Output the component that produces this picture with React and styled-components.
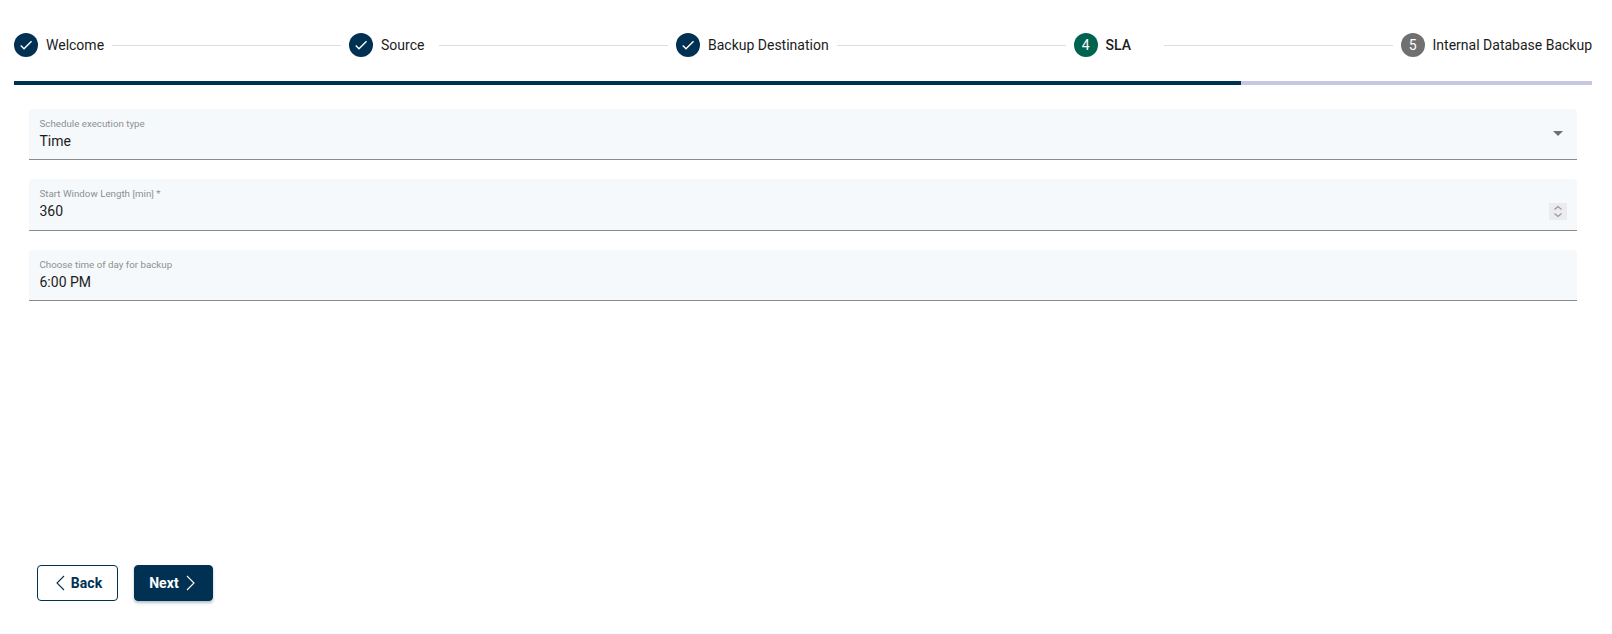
import React from 'react'
import styled, { createGlobalStyle } from 'styled-components'

const Global = createGlobalStyle`
  html, body { margin: 0; padding: 0; background: #fff; }
  body { font-family: Roboto, 'Liberation Sans', sans-serif; color: #1c1c1c; }
`

const Page = styled.div`
  display: flex;
  flex-direction: column;
  box-sizing: border-box;
  height: 634px;
  padding: 33px 20px 33px 14px;
`

const Stepper = styled.div`
  display: flex;
  align-items: center;
  height: 24px;
`

const Circle = styled.span`
  flex: none;
  display: flex;
  align-items: center;
  justify-content: center;
  width: 24px;
  height: 24px;
  border-radius: 50%;
  color: #fff;
  font-size: 14px;
  background: ${p => (p.$state === 'done' ? '#003153' : p.$state === 'active' ? '#00634f' : '#707070')};
`

const Label = styled.span`
  margin-left: 8px;
  min-width: 50px;
  font-size: 14px;
  line-height: 20px;
  white-space: nowrap;
  font-weight: ${p => (p.$active ? 500 : 400)};
`

const Line = styled.span`
  flex: 1;
  height: 1px;
  margin: 0 8px;
  background: #dedede;
`

const Progress = styled.div`
  height: 4px;
  margin-top: 24px;
  background: #c5c8e0;
`

const ProgressFill = styled.div`
  height: 100%;
  background: #003153;
`

const Form = styled.div`
  display: flex;
  flex-direction: column;
  gap: 19px;
  margin: 24px 0 0 15px;
  padding-right: 15px;
`

const Field = styled.div`
  position: relative;
  box-sizing: border-box;
  height: ${p => (p.$tall ? '52px' : '51px')};
  padding: 9px 10.5px 0;
  background: #f5f9fc;
  border-bottom: 1px solid #8b8b8b;
  border-radius: 4px 4px 0 0;
`

const FieldLabel = styled.div`
  font-size: 9.75px;
  line-height: 12px;
  color: #8f8f8f;
`

const FieldValue = styled.div`
  margin-top: 1px;
  font-size: 14px;
  line-height: 20px;
  color: #1c1c1c;
`

const Caret = styled.span`
  position: absolute;
  right: 14px;
  top: 22px;
  width: 0;
  height: 0;
  border-left: 5px solid transparent;
  border-right: 5px solid transparent;
  border-top: 5px solid #6f6f6f;
`

const Spinner = styled.span`
  position: absolute;
  right: 10px;
  top: 24px;
  display: flex;
  align-items: center;
  justify-content: center;
  width: 18px;
  height: 17px;
  background: #ebebf0;
  color: #96969c;
`

const Actions = styled.div`
  display: flex;
  gap: 16px;
  margin-top: auto;
  margin-left: 23px;
`

const Button = styled.button`
  display: flex;
  align-items: center;
  justify-content: center;
  gap: ${p => (p.$primary ? '3px' : '2px')};
  box-sizing: border-box;
  height: 36px;
  width: ${p => (p.$primary ? '79px' : '81px')};
  padding: 0;
  border: 1px solid #003153;
  border-radius: 4px;
  font-family: inherit;
  font-size: 14px;
  font-weight: 700;
  letter-spacing: 0.1px;
  color: ${p => (p.$primary ? '#fff' : '#003153')};
  background: ${p => (p.$primary ? '#003153' : '#fff')};
  box-shadow: ${p => (p.$primary ? '0 2px 3px rgba(0, 49, 83, 0.3)' : 'none')};
`

const Check = () => (
  <svg width="16" height="16" viewBox="0 0 24 24" fill="#fff">
    <path d="M9 16.17 4.83 12l-1.42 1.41L9 19 21 7l-1.41-1.41z" />
  </svg>
)

const Chevron = ({ left }) => (
  <svg width="16" height="18" viewBox="0 0 16 18" fill="none" stroke="currentColor" strokeWidth="1.1">
    <path d={left ? 'M11 2 4 9l7 7' : 'M5 2l7 7-7 7'} />
  </svg>
)

const Arrows = () => (
  <svg width="10" height="13" viewBox="0 0 10 13" fill="none" stroke="currentColor" strokeWidth="1.2">
    <path d="M1.5 4.5 5 1.5l3.5 3M1.5 8.5 5 11.5l3.5-3" />
  </svg>
)

const steps = [
  { label: 'Welcome', state: 'done' },
  { label: 'Source', state: 'done' },
  { label: 'Backup Destination', state: 'done' },
  { label: 'SLA', state: 'active', num: 4 },
  { label: 'Internal Database Backup', state: 'todo', num: 5 },
]

export default function App() {
  return (
    <Page>
      <Global />
      <Stepper>
        {steps.map((s, i) => (
          <React.Fragment key={s.label}>
            <Circle $state={s.state}>{s.state === 'done' ? <Check /> : s.num}</Circle>
            <Label $active={s.state === 'active'}>{s.label}</Label>
            {i < steps.length - 1 && <Line />}
          </React.Fragment>
        ))}
      </Stepper>
      <Progress>
        <ProgressFill style={{ width: `${(1227 / 1578) * 100}%` }} />
      </Progress>
      <Form>
        <Field>
          <FieldLabel>Schedule execution type</FieldLabel>
          <FieldValue>Time</FieldValue>
          <Caret />
        </Field>
        <Field $tall>
          <FieldLabel>Start Window Length [min] *</FieldLabel>
          <FieldValue>360</FieldValue>
          <Spinner><Arrows /></Spinner>
        </Field>
        <Field>
          <FieldLabel>Choose time of day for backup</FieldLabel>
          <FieldValue>6:00 PM</FieldValue>
        </Field>
      </Form>
      <Actions>
        <Button><Chevron left />Back</Button>
        <Button $primary>Next<Chevron /></Button>
      </Actions>
    </Page>
  )
}
